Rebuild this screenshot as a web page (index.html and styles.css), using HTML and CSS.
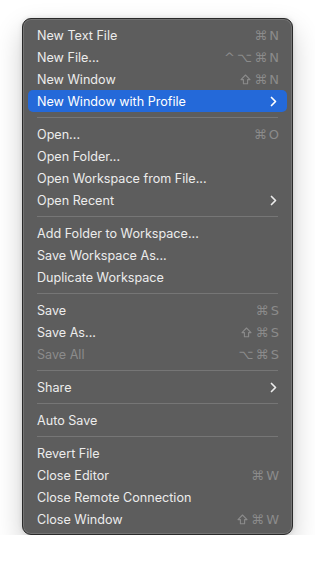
FILE: index.html
```html
<!DOCTYPE html>
<html lang="en">
<head>
  <meta charset="UTF-8" />
  <title>File menu</title>
  <link rel="stylesheet" href="styles.css">
</head>
<body>
  <div class="menu">
    <div class="item"><span>New Text File</span><span class="keys">⌘ N</span></div>
    <div class="item"><span>New File...</span><span class="keys">^ ⌥ ⌘ N</span></div>
    <div class="item"><span>New Window</span><span class="keys"><svg class="shift" width="11" height="11" viewBox="0 0 11 11"><path d="M5.5 1 L10 5.6 H7.6 V9.8 H3.4 V5.6 H1 Z" /></svg> ⌘ N</span></div>
    <div class="item active"><span>New Window with Profile</span>
      <svg class="chev" width="7" height="11" viewBox="0 0 7 11"><path d="M1.5 1.5 L5.5 5.5 L1.5 9.5" /></svg>
    </div>
    <div class="sep"></div>
    <div class="item"><span>Open...</span><span class="keys">⌘ O</span></div>
    <div class="item"><span>Open Folder...</span></div>
    <div class="item"><span>Open Workspace from File...</span></div>
    <div class="item"><span>Open Recent</span>
      <svg class="chev" width="7" height="11" viewBox="0 0 7 11"><path d="M1.5 1.5 L5.5 5.5 L1.5 9.5" /></svg>
    </div>
    <div class="sep"></div>
    <div class="item"><span>Add Folder to Workspace...</span></div>
    <div class="item"><span>Save Workspace As...</span></div>
    <div class="item"><span>Duplicate Workspace</span></div>
    <div class="sep"></div>
    <div class="item"><span>Save</span><span class="keys">⌘ S</span></div>
    <div class="item"><span>Save As...</span><span class="keys"><svg class="shift" width="11" height="11" viewBox="0 0 11 11"><path d="M5.5 1 L10 5.6 H7.6 V9.8 H3.4 V5.6 H1 Z" /></svg> ⌘ S</span></div>
    <div class="item disabled"><span>Save All</span><span class="keys">⌥ ⌘ S</span></div>
    <div class="sep"></div>
    <div class="item"><span>Share</span>
      <svg class="chev" width="7" height="11" viewBox="0 0 7 11"><path d="M1.5 1.5 L5.5 5.5 L1.5 9.5" /></svg>
    </div>
    <div class="sep"></div>
    <div class="item"><span>Auto Save</span></div>
    <div class="sep"></div>
    <div class="item"><span>Revert File</span></div>
    <div class="item"><span>Close Editor</span><span class="keys">⌘ W</span></div>
    <div class="item"><span>Close Remote Connection</span></div>
    <div class="item"><span>Close Window</span><span class="keys"><svg class="shift" width="11" height="11" viewBox="0 0 11 11"><path d="M5.5 1 L10 5.6 H7.6 V9.8 H3.4 V5.6 H1 Z" /></svg> ⌘ W</span></div>
  </div>
</body>
</html>
```

FILE: styles.css
```css
* {
  box-sizing: border-box;
}

body {
  margin: 0;
  padding: 18px 0 0 22px;
  background: #ffffff;
  font-family: Inter, 'Liberation Sans', sans-serif;
}

.menu {
  width: 271px;
  height: 517px;
  padding: 5px 5px;
  background: #5d5d5d;
  border: 1px solid #2a2a2a;
  border-radius: 9px;
  box-shadow: inset 0 0 0 1px #747474, 0 12px 28px rgba(0, 0, 0, 0.2), 0 0 5px rgba(0, 0, 0, 0.12);
}

.item {
  display: flex;
  align-items: center;
  justify-content: space-between;
  height: 22px;
  padding: 0 9px;
  border-radius: 5px;
  color: #ececec;
  font-size: 12.6px;
}

.item.active {
  background: #2469d9;
  color: #ffffff;
}

.item.disabled {
  color: #8c8c8c;
}

.keys {
  display: flex;
  align-items: center;
  color: #8b8b8b;
  font-family: 'DejaVu Sans', sans-serif;
  font-size: 13px;
  white-space: pre;
  word-spacing: -2px;
  margin-right: -1px;
}

.shift {
  margin-right: 1px;
  fill: none;
  stroke: #8b8b8b;
  stroke-width: 1.1;
  stroke-linejoin: round;
}

.chev {
  margin-right: 1px;
  fill: none;
  stroke: #ececec;
  stroke-width: 1.7;
  stroke-linecap: round;
  stroke-linejoin: round;
}

.active .chev {
  stroke: #ffffff;
}

.sep {
  height: 1px;
  margin: 5px 9px;
  background: #767676;
}
```
